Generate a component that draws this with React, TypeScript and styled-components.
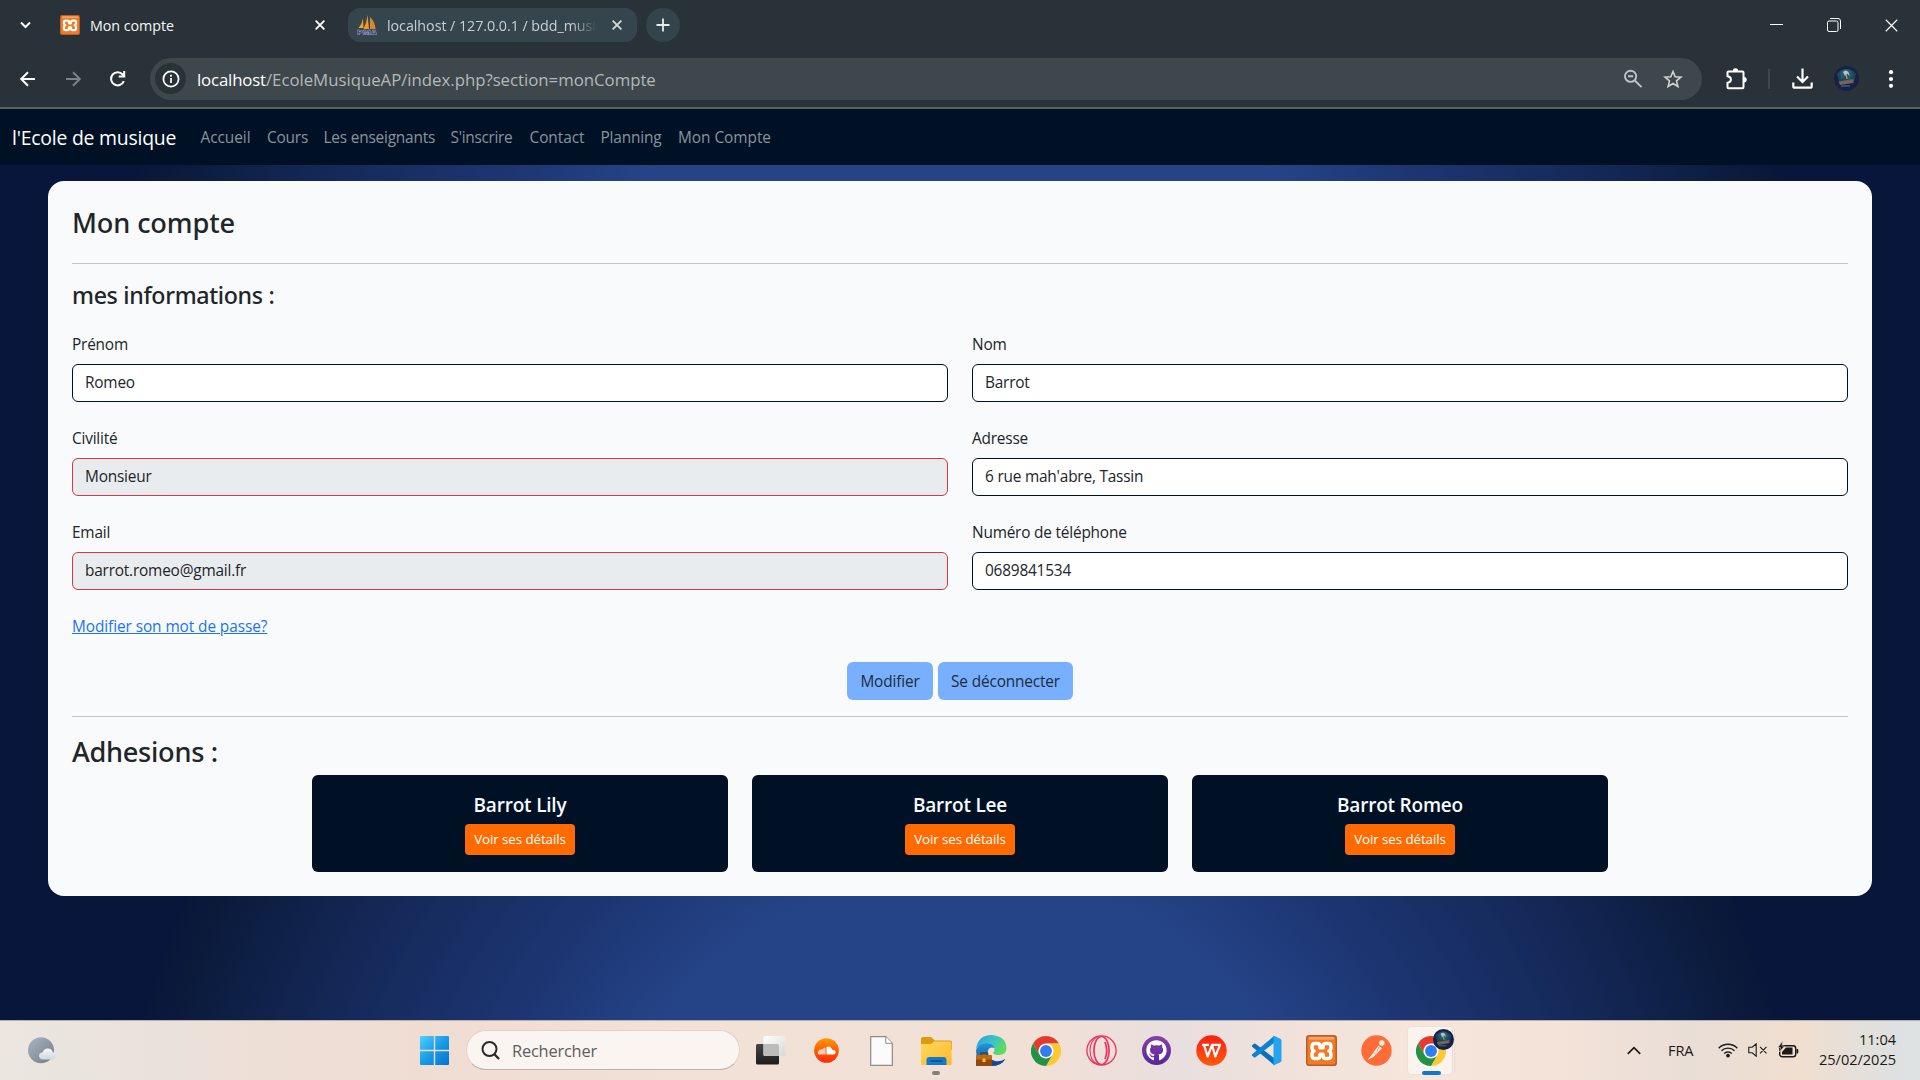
import React from "react";
import styled, { createGlobalStyle } from "styled-components";
import { FaGithub } from "react-icons/fa";

const GlobalStyle = createGlobalStyle`
  * { box-sizing: border-box; }
  body { margin: 0; font-family: "Open Sans", "Noto Sans", sans-serif; }
  #root { width: 1920px; height: 1080px; overflow: hidden; }
  svg { display: block; flex: none; }
`;

const Screen = styled.div`
  width: 1920px;
  height: 1080px;
  display: flex;
  flex-direction: column;
  overflow: hidden;
`;

/* ---------- Browser chrome ---------- */

const BrowserTop = styled.header`
  height: 109px;
  background: #283238;
  border-bottom: 2px solid #586361;
  display: flex;
  flex-direction: column;
`;

const TabStrip = styled.div`
  height: 50px;
  display: flex;
  align-items: center;
  padding-left: 19px;
`;

const Tab = styled.div<{ $w: number; $filled?: boolean }>`
  width: ${(p) => p.$w}px;
  height: 34px;
  margin-top: -1px;
  border-radius: 12px;
  background: ${(p) => (p.$filled ? "#35454d" : "transparent")};
  display: flex;
  align-items: center;
  padding: 0 15px 0 9px;
  gap: 10px;
  color: ${(p) => (p.$filled ? "#c9ced0" : "#f5f6f6")};
  & + & { margin-left: 8px; }
`;

const TabTitle = styled.span<{ $fade?: boolean }>`
  flex: 1;
  margin-right: 5px;
  padding-top: 2px;
  overflow: hidden;
  white-space: nowrap;
  font-size: 14.3px;
  line-height: 20px;
  letter-spacing: -0.05px;
  ${(p) => p.$fade && "mask-image: linear-gradient(90deg, #000 88%, transparent);"}
`;

const TabMenu = styled.div`
  width: 32px;
`;

const NewTab = styled.div`
  width: 34px;
  height: 34px;
  margin: -1px 0 0 9px;
  border-radius: 50%;
  background: #34444b;
  display: grid;
  place-items: center;
`;

const WindowButtons = styled.div`
  margin-left: auto;
  margin-right: 22px;
  display: flex;
  align-items: center;
  gap: 44px;
`;

const Toolbar = styled.div`
  height: 57px;
  display: flex;
  align-items: center;
  padding-left: 18px;
`;

const NavButtons = styled.div`
  flex: none;
  width: 132px;
  display: flex;
  align-items: center;
  gap: 25px;
`;

const AddressBar = styled.div`
  flex: none;
  width: 1552px;
  height: 42px;
  border-radius: 21px;
  background: #3e484c;
  display: flex;
  align-items: center;
  padding: 0 19px 0 5px;
`;

const InfoBadge = styled.div`
  width: 31px;
  height: 31px;
  border-radius: 50%;
  background: #283238;
  display: grid;
  place-items: center;
`;

const Url = styled.div`
  margin-left: 11px;
  padding-top: 2px;
  flex: 1;
  font-size: 16.8px;
  line-height: 24px;
  letter-spacing: -0.02px;
  color: #b3b8ba;
`;

const UrlHost = styled.span`
  color: #ffffff;
  letter-spacing: -0.15px;
`;

const AddressIcons = styled.div`
  display: flex;
  gap: 20px;
`;

const ToolbarIcons = styled.div`
  flex: 1;
  display: flex;
  align-items: center;
  margin-left: 23px;
`;

const Separator = styled.span`
  width: 2px;
  height: 20px;
  margin: 0 22px 0 20px;
  background: #3a4950;
`;

const Avatar = styled.div`
  margin: 0 22px 0 21px;
`;

/* ---------- Web page ---------- */

const SiteNav = styled.nav`
  height: 56px;
  background: #001126;
  display: flex;
  align-items: center;
  padding: 2px 12px 0;
`;

const Brand = styled.span`
  width: 181px;
  font-size: 19.4px;
  letter-spacing: -0.22px;
  line-height: 30px;
  color: #ffffff;
  white-space: nowrap;
`;

const NavLink = styled.span<{ $w: number; $ls: number }>`
  width: ${(p) => p.$w}px;
  padding-left: 7.5px;
  font-size: 15.4px;
  letter-spacing: ${(p) => p.$ls}px;
  line-height: 24px;
  color: #8b939d;
  white-space: nowrap;
`;

const Page = styled.main`
  height: 855px;
  padding: 16px 48px 0;
  background:
    radial-gradient(circle 850px at 960px 212px, #254488 43%, #1d3673 58%, #142857 79%, #0b1a3b 96%, #09163b 100%) 0 0 / 100% 420px no-repeat,
    radial-gradient(circle 850px at 960px 1080px, #254488 43%, #1d3673 58%, #142857 79%, #0b1a3b 96%, #09163b 100%) 0 0 / 100% 855px no-repeat;
`;

const Panel = styled.section`
  height: 715px;
  display: flex;
  flex-direction: column;
  border-radius: 16px;
  background: #f8fafc;
  padding: 24px;
  color: #212529;
`;

const Heading = styled.h2<{ $size: number; $lh: number; $ls: number }>`
  margin: 0 0 8px;
  padding-top: 3px;
  font-family: "Noto Sans", "Open Sans", sans-serif;
  font-size: ${(p) => p.$size}px;
  font-weight: 500;
  line-height: ${(p) => p.$lh - 3}px;
  letter-spacing: ${(p) => p.$ls}px;
`;

const Rule = styled.hr`
  width: 100%;
  margin: 16px 0;
  border: 0;
  height: 1px;
  flex: none;
  background: #c3c5c8;
`;

const Fields = styled.div`
  margin-top: 15.6px;
  display: grid;
  grid-template-columns: 1fr 1fr;
  gap: 24px;
`;

const Field = styled.label`
  display: flex;
  flex-direction: column;
  gap: 7px;
  padding-top: 1px;
  font-size: 15.4px;
  letter-spacing: -0.2px;
  line-height: 24px;
`;

const Input = styled.input<{ $locked?: boolean }>`
  height: 38px;
  width: 100%;
  padding: 0 12px;
  border: 1px solid ${(p) => (p.$locked ? "#dc3545" : "#001126")};
  border-radius: 6px;
  background: ${(p) => (p.$locked ? "#e9ecef" : "#ffffff")};
  font: inherit;
  letter-spacing: inherit;
  color: #212529;
  outline: none;
`;

const PasswordLink = styled.a`
  align-self: flex-start;
  margin: 25px 0 23px;
  font-size: 15.4px;
  letter-spacing: -0.08px;
  line-height: 24px;
  color: #1a73f5;
  text-decoration: underline;
`;

const Actions = styled.div`
  display: flex;
  justify-content: center;
  gap: 5px;
`;

const ActionButton = styled.button<{ $w: number }>`
  width: ${(p) => p.$w}px;
  height: 38px;
  padding: 2px 0 0;
  border: 0;
  border-radius: 6px;
  background: #78b0ff;
  font: 15.4px/24px "Open Sans", "Noto Sans", sans-serif;
  letter-spacing: -0.16px;
  color: #212c3a;
`;

const Members = styled.div`
  display: flex;
  justify-content: center;
  gap: 24px;
`;

const MemberCard = styled.article`
  width: 416px;
  height: 97px;
  border-radius: 6px;
  background: #001126;
  padding: 18px 0 0;
  display: flex;
  flex-direction: column;
  align-items: center;
`;

const MemberName = styled.h5`
  margin: 0 0 7px;
  font-size: 19px;
  font-weight: 600;
  letter-spacing: -0.2px;
  line-height: 24px;
  color: #f8fafc;
`;

const DetailButton = styled.button`
  width: 110px;
  height: 31px;
  padding: 1px 0 0;
  border: 0;
  border-radius: 4px;
  background: #ff6b00;
  font: 13.4px/21px "Open Sans", "Noto Sans", sans-serif;
  letter-spacing: -0.1px;
  color: #ffffff;
`;

/* ---------- Taskbar ---------- */

const Taskbar = styled.footer`
  height: 60px;
  border-top: 1px solid #b9afab;
  background: linear-gradient(90deg, #ebe6df 0, #e9e2dd 140px, #eedfd6 260px, #efddd3 420px, #f2e1d6 700px, #f1e0d6 1040px, #e9dfdf 1180px, #f0e2db 1280px, #f6e6db 1420px, #f2e2d8 1580px, #e9ded7 1690px, #f0decf 1800px, #dfe1e0 1890px, #dde2e3 1920px);
  display: flex;
  align-items: center;
`;

const Weather = styled.div`
  width: 407px;
  padding: 0 0 1px 27px;
`;

const AppCell = styled.div`
  position: relative;
  width: 55px;
  height: 58px;
  display: grid;
  place-items: center;
`;

const ActiveTile = styled.div`
  width: 48px;
  height: 49px;
  border-radius: 5px;
  background: #faf3ee;
  border: 1px solid #eee1d9;
  border-right: 3px double #e8dad0;
  display: flex;
  align-items: center;
  padding-left: 8px;
`;

const Indicator = styled.span<{ $w: number; $color: string }>`
  position: absolute;
  bottom: 5px;
  left: ${(p) => (55 - p.$w) / 2}px;
  width: ${(p) => p.$w}px;
  height: 4px;
  border-radius: 2px;
  background: ${(p) => p.$color};
`;

const TileBadge = styled.span`
  position: absolute;
  right: 5px;
  top: 7px;
`;

const SearchBox = styled.div`
  width: 274px;
  height: 40px;
  margin: 0 3.5px 2px 4px;
  border-radius: 20px;
  border: 1px solid #e3d1c7;
  border-bottom-color: #bfb1aa;
  background: #fbf5f2;
  display: flex;
  align-items: center;
  gap: 12px;
  padding: 1px 0 0 14px;
  font-size: 16.4px;
  letter-spacing: -0.2px;
  color: #605d5b;
`;

const Tray = styled.div`
  margin-left: auto;
  padding-right: 24px;
  display: flex;
  align-items: center;
  color: #1b1a19;
`;

const Language = styled.span`
  width: 50px;
  margin: -2px 0 0 27px;
  font-size: 14.6px;
  letter-spacing: -0.1px;
`;

const TrayIcons = styled.div`
  display: flex;
  align-items: center;
  gap: 10px;
  width: 101px;
  padding-bottom: 2px;
`;

const Clock = styled.div`
  width: 77px;
  padding-bottom: 4px;
  text-align: right;
  font-size: 14.6px;
  letter-spacing: -0.05px;
  line-height: 20px;
  white-space: nowrap;
`;

/* ---------- Icons ---------- */

const Cross = ({ size = 10, w = 1.8, color = "#fff" }: { size?: number; w?: number; color?: string }) => (
  <svg width={size} height={size} viewBox="0 0 10 10" stroke={color} strokeWidth={w}>
    <path d="M.6.6l8.8 8.8M9.4.6L.6 9.4" />
  </svg>
);

const Xampp = ({ size }: { size: number }) => (
  <svg width={size} height={size} viewBox="0 0 30 30">
    <rect width="30" height="30" rx="3" fill="#b8602a" />
    <rect x="1.5" y="1.5" width="27" height="27" rx="2" fill="#f27a22" />
    <rect x="3" y="2" width="24" height="2.5" fill="#f5a56a" />
    <path
      d="M8.200 8.300h3q2.300 0 2.300 2.300v1.900h3v-1.900q0-2.300 2.300-2.300h3q2.300 0 2.300 2.300v1.900q0 2.200-2 3 2 .8 2 3v1.900q0 2.300-2.300 2.300h-3q-2.300 0-2.300-2.300v-1.900h-3v1.900q0 2.300-2.300 2.300h-3q-2.300 0-2.300-2.300v-1.900q0-2.200 2-3-2-.8-2-3v-1.900q0-2.300 2.300-2.300z"
      fill="none"
      stroke="#fff"
      strokeWidth="3.3"
      strokeLinejoin="round"
    />
  </svg>
);

const Sails = () => (
  <svg width="20" height="20" viewBox="0 0 20 20">
    <path d="M6 3.500L6.500 13H1.500Q5 9 6 3.500z" fill="#f0a030" />
    <path d="M10.500 0l1.500 14H6.500Q10 7 10.500 0z" fill="#f79a1c" />
    <path d="M13 2q5 5 5.500 12H13z" fill="#d98a2c" />
    <text x="0" y="19.6" fontFamily="Open Sans, sans-serif" fontWeight="800" fontSize="7" textLength="20" lengthAdjust="spacingAndGlyphs" fill="#35386b" stroke="#aeb3cf" strokeWidth=".4">PMA</text>
  </svg>
);

const AvatarArt = ({ size }: { size: number }) => (
  <svg width={size} height={size} viewBox="0 0 25 25">
    <circle cx="12.5" cy="12.5" r="12.5" fill="#191f49" />
    <path d="M3 8a11 10 0 0 1 19 0l-2 7H5z" fill="#17485c" />
    <path d="M6 7q2-4 6-4 5 0 7 5-2 5-5 7l-2-5-3 3q-3-2-3-6z" fill="#23596f" />
    <path d="M9 6q2.500-3 5.500 0l1 4-2.500-2.500-2 2.500z" fill="#b5c5c8" />
    <path d="M4.500 15.500l15-2.500v4L6 19z" fill="#8f5340" />
    <path d="M6 17l13-2M7 20h9" stroke="#2b8b98" strokeWidth="1" />
    <path d="M12 8l1 5" stroke="#d29b45" strokeWidth="1.2" />
  </svg>
);

const ChromeLogo = () => (
  <svg width="30" height="30" viewBox="0 0 48 48">
    <circle cx="24" cy="24" r="12" fill="#fff" />
    <path d="M24 12h20.781a23.994 23.994 0 0 0-41.564.003L13.608 30l.009-.002A11.985 11.985 0 0 1 24 12z" fill="#e33b2e" />
    <path d="M34.391 30.003L24.001 48A23.994 23.994 0 0 0 44.780 12.003H23.999l-.003.009a11.985 11.985 0 0 1 10.395 17.991z" fill="#fcc934" />
    <path d="M13.609 30.003L3.218 12.006A23.994 23.994 0 0 0 24.003 48l10.390-17.997-.006-.007a11.985 11.985 0 0 1-20.778.007z" fill="#229342" />
    <circle cx="24" cy="24" r="9.5" fill="#2f7df0" />
  </svg>
);

const WindowsLogo = () => (
  <svg width="29" height="29" viewBox="0 0 29 29">
    <defs>
      <linearGradient id="win" x1="0" y1="0" x2="29" y2="29" gradientUnits="userSpaceOnUse">
        <stop stopColor="#4fd0fb" />
        <stop offset=".5" stopColor="#1a9be6" />
        <stop offset="1" stopColor="#0072d3" />
      </linearGradient>
    </defs>
    <path fill="url(#win)" d="M1 0h12.800v13.800H0V1q0-1 1-1zM15.200 0H28q1 0 1 1v12.800H15.200zM0 15.200h13.800V29H1q-1 0-1-1zM15.200 15.200H29V28q0 1-1 1H15.200z" />
  </svg>
);

const TaskView = () => (
  <svg width="30" height="29" viewBox="0 0 30 29">
    <defs>
      <linearGradient id="tvd" x1="0" y1="0" x2="0" y2="1"><stop stopColor="#454543" /><stop offset="1" stopColor="#1c1c1b" /></linearGradient>
      <linearGradient id="tvl" x1="0" y1="0" x2="1" y2="1"><stop stopColor="#fff" /><stop offset="1" stopColor="#d9d9da" /></linearGradient>
    </defs>
    <rect y="8" width="23" height="20.5" rx="1.5" fill="url(#tvd)" />
    <rect x="7.5" y="0" width="22" height="20" rx="1.5" fill="url(#tvl)" />
    <path d="M7.500 8H21.500q1.500 0 1.500 1.500V20H9q-1.500 0-1.500-1.500z" fill="#bcbcbb" />
  </svg>
);

const SoundCloud = () => (
  <svg width="25" height="25" viewBox="0 0 25 25">
    <defs><linearGradient id="sc" x1="0" y1="0" x2="0" y2="1"><stop stopColor="#ff9a00" /><stop offset=".55" stopColor="#ff5500" /><stop offset="1" stopColor="#ff2a0a" /></linearGradient></defs>
    <circle cx="12.5" cy="12.5" r="12.3" fill="url(#sc)" />
    <path d="M12.500 16.500V9q4-2 6 3 3.200-.3 3.200 2.200 0 2.300-2.300 2.300z" fill="#fff" />
    <path d="M11.500 16.500V9.800q-2-.6-3 1.500-3-.3-4.500 2.200-.8 2.500 1 3z" fill="#ffd0b5" />
  </svg>
);

const FileIcon = () => (
  <svg width="23" height="30" viewBox="0 0 23 30">
    <path d="M.7.7h15l6.600 6.600v22H.7z" fill="#fbfbfb" stroke="#8f8b88" strokeWidth="1.2" />
    <path d="M15.700.7v6.600h6.600" fill="#fff" stroke="#8f8b88" />
  </svg>
);

const Folder = () => (
  <svg width="31" height="30" viewBox="0 0 31 30">
    <defs><linearGradient id="fo" x1="0" y1="0" x2="1" y2="1"><stop stopColor="#ffd95c" /><stop offset="1" stopColor="#fdb92b" /></linearGradient></defs>
    <path d="M0 3q0-2 2-2h8l4 3.500h15q2 0 2 2V14H0z" fill="#dd9a10" />
    <path d="M0 8h10l3-2.500h16q1.500 0 1.500 1.500v22H0z" fill="url(#fo)" />
    <path d="M5.500 29v-5q0-3 3-3h14q3 0 3 3v5z" fill="#1579c9" />
    <path d="M9.500 25h12" stroke="#0b4c93" strokeWidth="1.5" />
  </svg>
);

const Edge = () => (
  <svg width="31" height="31" viewBox="0 0 31 31">
    <defs>
      <linearGradient id="ed1" x1="0" y1="0" x2="1" y2=".5"><stop stopColor="#2a9fe0" /><stop offset=".55" stopColor="#37c3c9" /><stop offset="1" stopColor="#5fdc5d" /></linearGradient>
      <linearGradient id="ed2" x1="0" y1="0" x2="0" y2="1"><stop stopColor="#2196de" /><stop offset="1" stopColor="#0c52a5" /></linearGradient>
    </defs>
    <path d="M0 14Q2 0 15.500 0 30 1 30.500 13q-.3 7-7.500 7-5 0-6-2 2-2 1.500-5Q17 8 10 8 4 8.500 0 14z" fill="url(#ed1)" />
    <path d="M0 15Q3 8 10 8q7 0 8.500 5-5-2-6.500 2.500Q11 22 16 26q6 4 13-2-4 7-13 7H8Q0 27 0 15z" fill="url(#ed2)" />
    <path d="M12 17q0 7 7 9 5 1 10.500-2Q25 31 16 31l-4-6z" fill="#124a96" />
    <rect y="20" width="16" height="11" rx="1" fill="#bd6a10" />
    <path d="M5 20v-2h6v2" fill="none" stroke="#6e3a08" strokeWidth="1.5" />
    <path d="M0 24.500h16V31H0z" fill="#92490b" />
    <rect x="6.5" y="23.5" width="3" height="3.5" fill="#f8c13a" />
  </svg>
);

const OperaGx = () => (
  <svg width="31" height="31" viewBox="0 0 31 31" fill="none" stroke="#f3305d">
    <circle cx="15.5" cy="15.5" r="14.6" strokeWidth="1.3" />
    <ellipse cx="15.5" cy="15.5" rx="7.6" ry="14" strokeWidth="1.7" />
    <path d="M12 1.500Q4 5 4 15.500T12 29.500" strokeWidth="1.1" />
    <path d="M19 7q3.500 8.500 0 17" strokeWidth="1.7" />
  </svg>
);

const GithubDesktop = styled.div`
  width: 29px;
  height: 29px;
  border-radius: 50%;
  background: linear-gradient(#8a3fa8, #56289a);
  color: #fff;
  display: grid;
  place-items: center;
`;

const Wps = () => (
  <svg width="31" height="31" viewBox="0 0 31 31">
    <defs><linearGradient id="wp" x1="0" y1="0" x2="0" y2="1"><stop stopColor="#fb1f13" /><stop offset="1" stopColor="#ff5a0b" /></linearGradient></defs>
    <circle cx="15.5" cy="15.5" r="15.2" fill="url(#wp)" />
    <path d="M6 9.800h7M8 10l3.600 11.500L16 10l3.300 11.500L24 9.800h-8.500" fill="none" stroke="#fff" strokeWidth="2.2" strokeLinejoin="round" />
  </svg>
);

const VsCode = () => (
  <svg width="31" height="31" viewBox="0 0 31 31">
    <path d="M1 10.500l2-1.700q.8-.5 1.500 0L23 23v7L1.200 11.800q-.6-.7-.2-1.300z" fill="#0a70bd" />
    <path d="M1 20.500l2 1.700q.8.500 1.500 0L23 8V1L1.200 19.200q-.6.7-.2 1.300z" fill="#0a84d1" />
    <path d="M22.500.5l6.800 3.200q1.200.6 1.200 1.800v20q0 1.200-1.200 1.800l-6.800 3.200z" fill="#25a4ee" />
  </svg>
);

const Postman = () => (
  <svg width="31" height="31" viewBox="0 0 31 31">
    <circle cx="15.5" cy="15.5" r="15.2" fill="#ff6c37" />
    <circle cx="20.8" cy="8" r="2.7" fill="#fff0e8" />
    <path d="M17.500 10.500l3.500 2.800-8.500 8.700L6.500 25l4-5z" fill="#fff0e8" />
    <path d="M12.500 17l3 3M15.500 17l3-6" stroke="#ff9a72" strokeWidth="1" />
  </svg>
);

const WeatherIcon = () => (
  <svg width="30" height="27" viewBox="0 0 30 27">
    <defs>
      <linearGradient id="mo" x1="0" y1="0" x2="1" y2="1"><stop stopColor="#abb6c1" /><stop offset="1" stopColor="#737b85" /></linearGradient>
      <linearGradient id="cl" x1="0" y1="0" x2="0" y2="1"><stop stopColor="#f6f9fc" /><stop offset="1" stopColor="#cdd7e1" /></linearGradient>
    </defs>
    <circle cx="14" cy="13.2" r="13" fill="url(#mo)" />
    <path d="M16 22.500q-4-.3-4-3.800 0-3 3.500-3.300Q17 11.300 21 11.500q4 .2 4.800 4 3.200.3 3.200 3.500 0 3.300-3.500 3.500z" fill="url(#cl)" />
  </svg>
);

const FIELDS = [
  { label: "Prénom", value: "Romeo" },
  { label: "Nom", value: "Barrot" },
  { label: "Civilité", value: "Monsieur", locked: true },
  { label: "Adresse", value: "6 rue mah'abre, Tassin" },
  { label: "Email", value: "barrot.romeo@gmail.fr", locked: true },
  { label: "Numéro de téléphone", value: "0689841534" },
];

const LINKS = [
  { text: "Accueil", w: 66.5, ls: -0.05 },
  { text: "Cours", w: 56.5, ls: -0.2 },
  { text: "Les enseignants", w: 127, ls: -0.2 },
  { text: "S'inscrire", w: 79, ls: -0.3 },
  { text: "Contact", w: 71, ls: -0.05 },
  { text: "Planning", w: 77.5, ls: -0.16 },
  { text: "Mon Compte", w: 110, ls: -0.03 },
];

const TASKBAR_APPS = [
  <TaskView />,
  <SoundCloud />,
  <FileIcon />,
  <><Folder /><Indicator $w={8} $color="#86807c" /></>,
  <Edge />,
  <ChromeLogo />,
  <OperaGx />,
  <GithubDesktop><FaGithub size={21} /></GithubDesktop>,
  <Wps />,
  <VsCode />,
  <Xampp size={31} />,
  <Postman />,
];

export default function App() {
  return (
    <Screen>
      <GlobalStyle />
      <BrowserTop>
        <TabStrip>
          <TabMenu>
            <svg width="13" height="8" viewBox="0 0 13 8" fill="none" stroke="#fff" strokeWidth="2"><path d="M2 1.500l4.500 4.500L11 1.500" /></svg>
          </TabMenu>
          <Tab $w={289}>
            <Xampp size={20} />
            <TabTitle>Mon compte</TabTitle>
            <Cross />
          </Tab>
          <Tab $w={289} $filled>
            <Sails />
            <TabTitle $fade>localhost / 127.0.0.1 / bdd_musique</TabTitle>
            <Cross color="#d5d9da" />
          </Tab>
          <NewTab>
            <svg width="14" height="14" viewBox="0 0 14 14" stroke="#e8eaeb" strokeWidth="1.8"><path d="M7 .5v13M.5 7h13" /></svg>
          </NewTab>
          <WindowButtons>
            <svg width="13" height="2" viewBox="0 0 13 2"><path d="M0 .5h13" stroke="#fff" /></svg>
            <svg width="14" height="14" viewBox="0 0 14 14" fill="none" stroke="#fff">
              <rect x=".5" y="3" width="10.5" height="10.5" rx="1.5" />
              <path d="M3 .5h8q2.500 0 2.500 2.500v8" />
            </svg>
            <Cross size={13} w={0.9} />
          </WindowButtons>
        </TabStrip>
        <Toolbar>
          <NavButtons>
            <svg width="20" height="20" viewBox="0 0 20 20" fill="none" stroke="#fff" strokeWidth="2"><path d="M17 10H3.500M10 3.200L3.200 10l6.800 6.800" /></svg>
            <svg width="20" height="20" viewBox="0 0 20 20" fill="none" stroke="#7c8386" strokeWidth="2"><path d="M3 10h13.500M10 3.200l6.800 6.800-6.800 6.800" /></svg>
            <svg width="20" height="20" viewBox="0 0 20 20" fill="none" stroke="#fff" strokeWidth="2"><path d="M15.800 12.200A6.600 6.600 0 1 1 14.700 5.500L16 7M16.200 2v5.500h-5.500" /></svg>
          </NavButtons>
          <AddressBar>
            <InfoBadge>
              <svg width="18" height="18" viewBox="0 0 18 18" fill="none" stroke="#fff" strokeWidth="1.7"><circle cx="9" cy="9" r="7.6" /><path d="M9 8v5M9 4.800v1.900" /></svg>
            </InfoBadge>
            <Url><UrlHost>localhost</UrlHost>/EcoleMusiqueAP/index.php?section=monCompte</Url>
            <AddressIcons>
              <svg width="20" height="20" viewBox="0 0 20 20" fill="none" stroke="#bfc3c5" strokeWidth="1.9"><circle cx="7.6" cy="7.3" r="5.6" /><path d="M11.800 11.500l6.700 6.700M5 7.300h5.200" /></svg>
              <svg width="20" height="20" viewBox="0 0 20 20" fill="none" stroke="#d0d3d4" strokeWidth="1.6"><path d="M10 2.500l2.200 5.300 5.700.4-4.400 3.700 1.400 5.600-4.900-3-4.900 3 1.400-5.600-4.400-3.700 5.700-.4z" /></svg>
            </AddressIcons>
          </AddressBar>
          <ToolbarIcons>
            <svg width="23" height="22" viewBox="0 0 23 22">
              <path d="M3.500 3.500h14q1 0 1 1v14.700q0 1-1 1h-14q-1 0-1-1v-4.400q3.400-.4 3.400-3.300T2.500 8.200V4.500q0-1 1-1z" fill="none" stroke="#fff" strokeWidth="2" />
              <path d="M7.800 3a2.700 2.700 0 0 1 5.400 0zM19 9a2.700 2.700 0 0 1 0 5.400z" fill="#fff" />
            </svg>
            <Separator />
            <svg width="21" height="21" viewBox="0 0 21 21" fill="none" stroke="#fff" strokeWidth="2.2"><path d="M10.500.5v13M5 8.500l5.500 5.500L16 8.500M1.300 14.500v3.700q0 1.500 1.500 1.500h15.400q1.500 0 1.500-1.500v-3.700" /></svg>
            <Avatar><AvatarArt size={25} /></Avatar>
            <svg width="20" height="20" viewBox="0 0 20 20" fill="#fff"><circle cx="10" cy="3.2" r="2.1" /><circle cx="10" cy="10" r="2.1" /><circle cx="10" cy="16.8" r="2.1" /></svg>
          </ToolbarIcons>
        </Toolbar>
      </BrowserTop>

      <SiteNav>
        <Brand>l'Ecole de musique</Brand>
        {LINKS.map((l) => (
          <NavLink key={l.text} $w={l.w} $ls={l.ls}>{l.text}</NavLink>
        ))}
      </SiteNav>

      <Page>
        <Panel>
          <Heading $size={27.2} $lh={33.6} $ls={-0.14}>Mon compte</Heading>
          <Rule />
          <Heading as="h4" $size={23.2} $lh={28.8} $ls={-0.33}>mes informations :</Heading>
          <Fields>
            {FIELDS.map((f) => (
              <Field key={f.label}>
                {f.label}
                <Input readOnly value={f.value} $locked={f.locked} />
              </Field>
            ))}
          </Fields>
          <PasswordLink>Modifier son mot de passe?</PasswordLink>
          <Actions>
            <ActionButton $w={86}>Modifier</ActionButton>
            <ActionButton $w={135}>Se déconnecter</ActionButton>
          </Actions>
          <Rule />
          <Heading $size={27.2} $lh={34} $ls={-0.3}>Adhesions :</Heading>
          <Members>
            {["Barrot Lily", "Barrot Lee", "Barrot Romeo"].map((name) => (
              <MemberCard key={name}>
                <MemberName>{name}</MemberName>
                <DetailButton>Voir ses détails</DetailButton>
              </MemberCard>
            ))}
          </Members>
        </Panel>
      </Page>

      <Taskbar>
        <Weather><WeatherIcon /></Weather>
        <AppCell><WindowsLogo /></AppCell>
        <SearchBox>
          <svg width="19" height="19" viewBox="0 0 19 19" fill="none" stroke="#2b2b2a" strokeWidth="2"><circle cx="8.5" cy="8" r="7" /><path d="M13.200 13l4.800 5" strokeWidth="2.4" /></svg>
          Rechercher
        </SearchBox>
        {TASKBAR_APPS.map((icon, i) => (
          <AppCell key={i}>{icon}</AppCell>
        ))}
        <AppCell>
          <ActiveTile><ChromeLogo /></ActiveTile>
          <TileBadge><AvatarArt size={21} /></TileBadge>
          <Indicator $w={19} $color="#0a78d4" />
        </AppCell>
        <Tray>
          <svg width="14" height="9" viewBox="0 0 14 9" fill="none" stroke="#1b1a19" strokeWidth="1.7"><path d="M.8 7.800L7 1.600l6.200 6.200" /></svg>
          <Language>FRA</Language>
          <TrayIcons>
            <svg width="20" height="16" viewBox="0 0 20 16" fill="none" stroke="#1b1a19" strokeWidth="1.4">
              <path d="M.7 6.200a13 13 0 0 1 18.600 0M3.500 8.800a9.200 9.200 0 0 1 13 0M6.200 11.500a5.400 5.400 0 0 1 7.600 0" />
              <circle cx="10" cy="13.6" r="1.9" fill="#1b1a19" stroke="none" />
            </svg>
            <svg width="20" height="14" viewBox="0 0 20 14" fill="none" stroke="#1b1a19" strokeWidth="1.1"><path d="M8.200.8v12.400L4.200 9.800H.8V4.200h3.400zM12 3.800l6.500 6.500M18.500 3.800L12 10.300" /></svg>
            <svg width="21" height="17" viewBox="0 0 21 17">
              <rect x="1.7" y="4.7" width="16" height="11" rx="2.5" fill="none" stroke="#1b1a19" strokeWidth="1.4" />
              <path d="M4 13.500V11l4-4.500h6.500v7zM18.500 8h1.500q1 2.200 0 4.500h-1.500z" fill="#1b1a19" />
              <path d="M4.500 0L0 6.500h2.500L1.500 11 6.500 5H4z" fill="#1b1a19" stroke="#eedfd3" strokeWidth=".5" />
            </svg>
          </TrayIcons>
          <Clock>11:04<br />25/02/2025</Clock>
        </Tray>
      </Taskbar>
    </Screen>
  );
}
